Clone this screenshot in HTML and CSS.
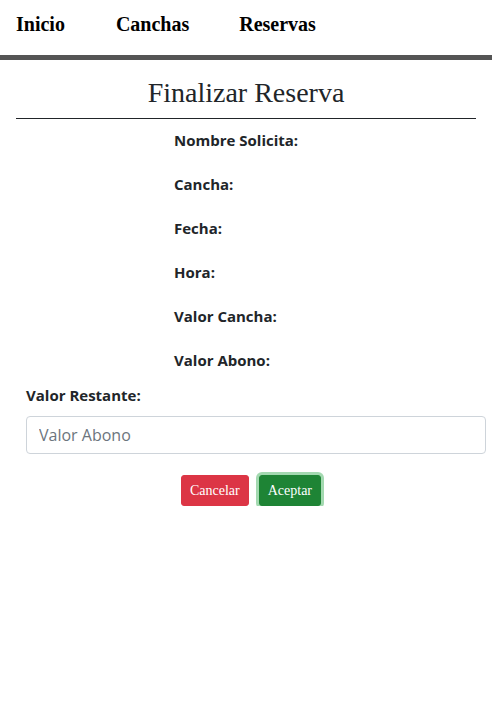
FILE: index.html
```html
<!DOCTYPE html>
<html lang="es">
<head>
<meta charset="utf-8">
<title>Finalizar Reserva</title>
<link rel="stylesheet" href="styles.css">
</head>
<body>
<nav class="topnav">
  <a class="navlink nav-inicio" href="#">Inicio</a>
  <a class="navlink nav-canchas" href="#">Canchas</a>
  <a class="navlink nav-reservas" href="#">Reservas</a>
</nav>
<div class="navbar-border"></div>
<main class="page">
  <h1 class="title">Finalizar Reserva</h1>
  <hr class="rule">
  <div class="details">
    <p class="detail">Nombre Solicita:</p>
    <p class="detail">Cancha:</p>
    <p class="detail">Fecha:</p>
    <p class="detail">Hora:</p>
    <p class="detail">Valor Cancha:</p>
    <p class="detail">Valor Abono:</p>
  </div>
  <div class="form-group">
    <label class="form-label" for="abono">Valor Restante:</label>
    <input class="form-control" id="abono" type="text" placeholder="Valor Abono">
  </div>
  <div class="actions">
    <button class="btn btn-cancel" type="button">Cancelar</button>
    <button class="btn btn-accept" type="button">Aceptar</button>
  </div>
</main>
</body>
</html>
```
FILE: styles.css
```css
html, body {
  margin: 0;
  padding: 0;
  background: #fff;
}
body {
  font-family: "Liberation Serif", "Times New Roman", serif;
  color: #212529;
}
.topnav {
  display: flex;
  align-items: center;
  height: 55px;
  padding-left: 16px;
}
.navlink {
  font-family: "Liberation Serif", serif;
  font-weight: bold;
  font-size: 20px;
  color: #000;
  text-decoration: none;
  padding-bottom: 6px;
}
.nav-inicio { margin-right: 51px; }
.nav-canchas { margin-right: 50px; }
.navbar-border {
  height: 5px;
  background: #555;
}
.page {
  padding: 0 16px;
}
.title {
  margin: 16px 0 0;
  font-family: "Liberation Serif", serif;
  font-weight: normal;
  font-size: 28px;
  line-height: 34px;
  text-align: center;
  color: #212529;
}
.rule {
  margin: 8px 0 0;
  border: 0;
  border-top: 1px solid #212529;
}
.details {
  padding-left: 158px;
  padding-top: 9px;
}
.detail {
  margin: 0 0 20px;
  font-family: "Open Sans", "Noto Sans", sans-serif;
  font-weight: bold;
  font-size: 15px;
  line-height: 24px;
  color: #212529;
}
.form-group {
  margin: -9px -10px 0 10px;
  display: flex;
  flex-direction: column;
}
.form-label {
  font-family: "Open Sans", "Noto Sans", sans-serif;
  font-weight: bold;
  font-size: 15px;
  line-height: 24px;
  margin-bottom: 9px;
  color: #212529;
}
.form-control {
  box-sizing: border-box;
  height: 38px;
  padding: 6px 12px;
  font-family: "Open Sans", "Noto Sans", sans-serif;
  font-size: 16px;
  color: #212529;
  border: 1px solid #ced4da;
  border-radius: 4px;
  background: #fff;
}
.form-control::placeholder {
  color: #6c757d;
}
.actions {
  display: flex;
  justify-content: center;
  gap: 10px;
  margin-top: 21px;
  padding-left: 10px;
}
.btn {
  font-family: "Liberation Serif", serif;
  font-size: 14px;
  color: #fff;
  border: 1px solid transparent;
  border-radius: 3px;
  height: 31px;
  padding: 0 8px;
}
.btn-cancel {
  background: #dc3545;
  border-color: #dc3545;
}
.btn-accept {
  background: #1e8435;
  border-color: #1e8435;
  box-shadow: 0 0 0 3px #a3d9b0;
}
```
